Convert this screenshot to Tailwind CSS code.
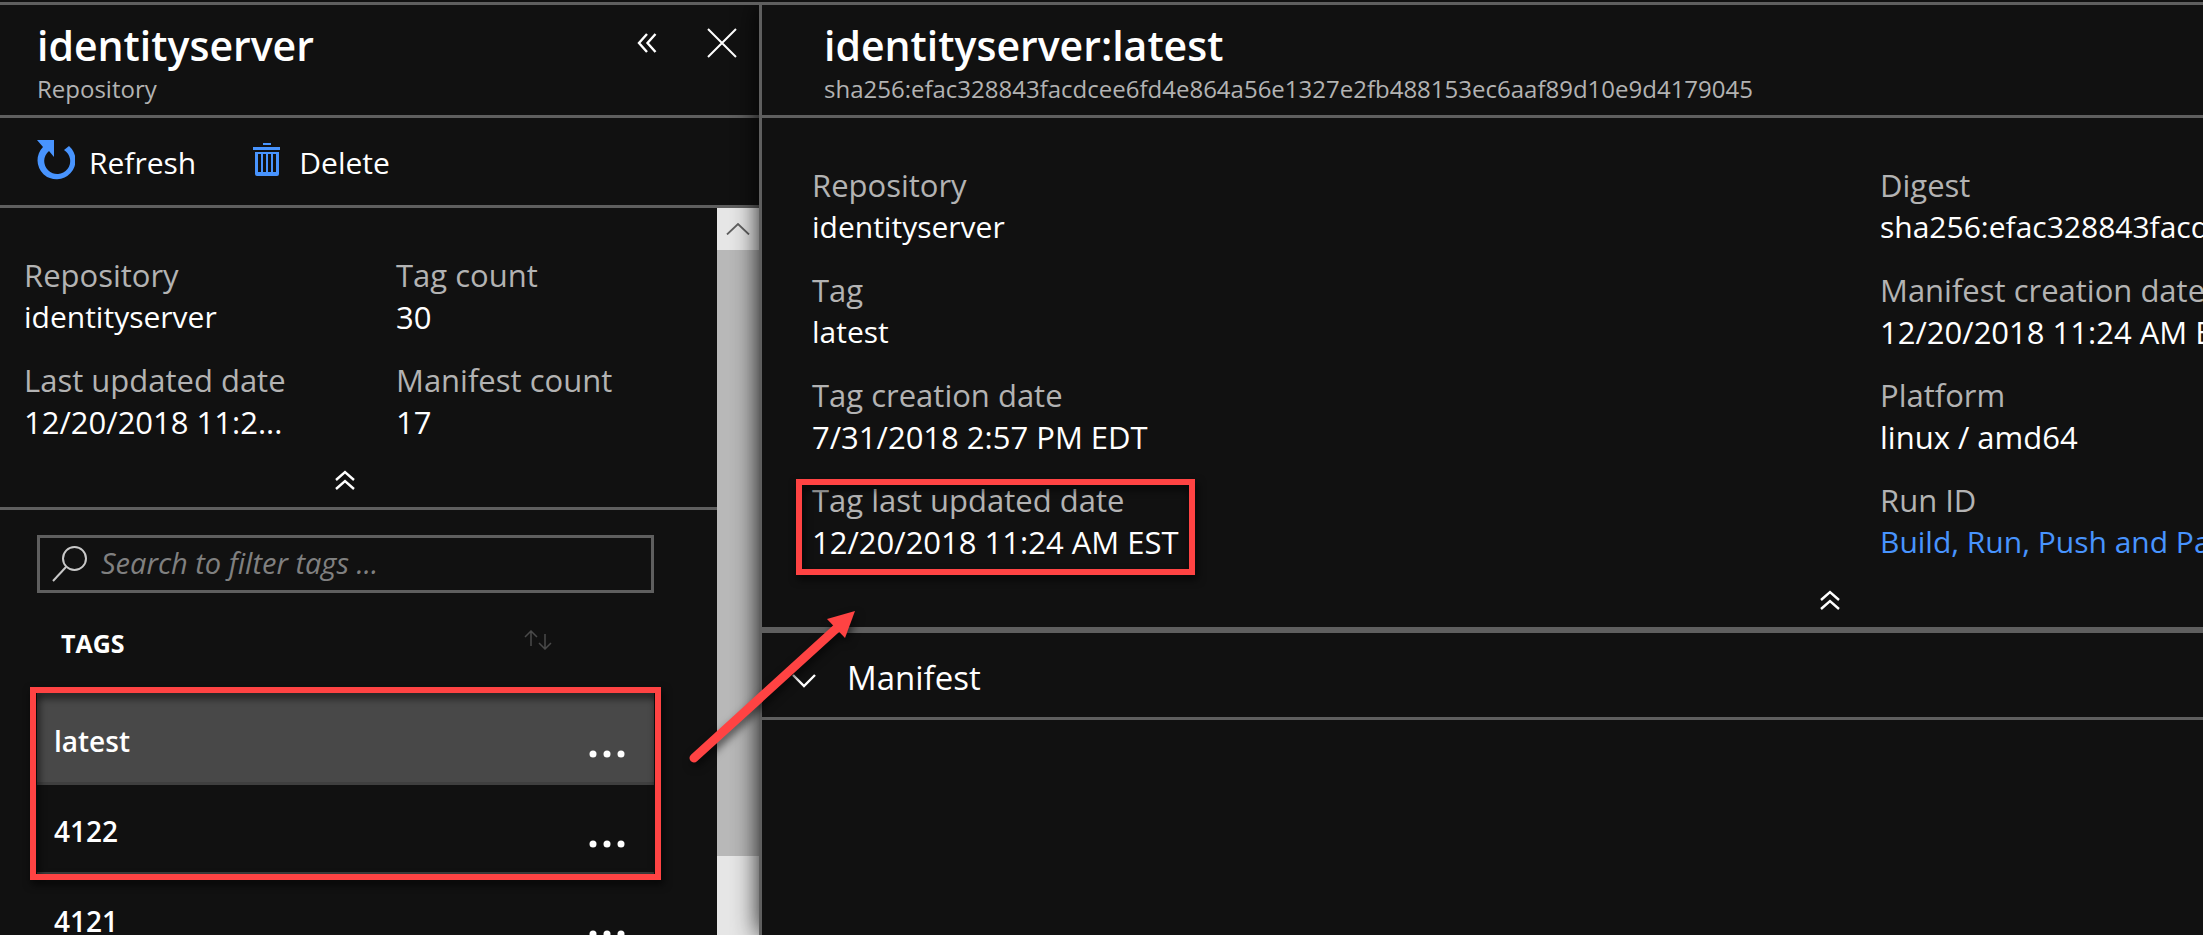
<!DOCTYPE html>
<html lang="en">
<head>
  <meta charset="UTF-8" />
  <meta name="viewport" content="width=device-width, initial-scale=1" />
  <title>identityserver - Repository</title>
  <script src="https://cdn.jsdelivr.net/npm/@tailwindcss/browser@4"></script>
</head>
<body class="bg-[#111111] text-white text-[31px] leading-[42px] font-['Open_Sans','Noto_Sans',sans-serif]">
  <div class="relative h-screen overflow-hidden flex flex-col pt-0.5">
    <div class="flex flex-1 min-h-0 border-t-3 border-[#5f5f5f]">

      <!-- Repository blade -->
      <section class="w-[759px] shrink-0 flex flex-col min-h-0">
        <header class="h-[113px] shrink-0 border-b-3 border-[#5f5f5f] flex justify-between pl-[37px] pr-[22px] pt-3">
          <div>
            <h1 class="text-[41px] leading-[56px] font-semibold">identityserver</h1>
            <p class="text-[24px] leading-[32px] text-[#b3b3b3]">Repository</p>
          </div>
          <div class="flex gap-[50px] items-start pt-[11px]">
            <button aria-label="Collapse" class="w-5 h-[30px] flex items-center">
              <svg class="w-5 h-5" viewBox="0 0 20 20" fill="none" stroke="currentColor" stroke-width="2.4"><path d="M10 1 2 10l8 9M18.500 1l-8 9 8 9" /></svg>
            </button>
            <button aria-label="Close" class="w-[30px] h-[30px]">
              <svg class="w-[30px] h-[30px]" viewBox="0 0 30 30" fill="none" stroke="currentColor" stroke-width="2"><path d="m1 1 28 28M29 1 1 29" /></svg>
            </button>
          </div>
        </header>

        <div class="h-[90px] shrink-0 border-b-3 border-[#5f5f5f] flex items-start gap-[57px] pl-[37px] pt-[22px] text-[30px]">
          <button class="flex items-start gap-[14px]">
            <svg class="w-[38px] h-10" viewBox="0 0 38 40" fill="#4894fe"><path d="M0 0h17v17l-5-6a13 13 0 1 0 15-1L32 6A19 19 0 1 1 6 7z" /></svg>
            <span class="pt-0.5">Refresh</span>
          </button>
          <button class="flex items-start gap-[18px]">
            <svg class="w-[28px] h-9 mt-0.5" viewBox="0 0 28 36" fill="#4894fe"><path d="M10 1h8v2h-8zM0 5h27v3H0zM2 10h24v22q0 2-2 2H4q-2 0-2-2zM5 12v18h3V12zm5 0v18h3V12zm5 0v18h3V12zm5 0v18h3V12z" fill-rule="evenodd" /></svg>
            <span class="pt-0.5">Delete</span>
          </button>
        </div>

        <div class="flex flex-1 min-h-0">
          <div class="flex-1 min-w-0 overflow-hidden">
            <div class="border-b-3 border-[#5f5f5f] pt-[46px]">
              <dl class="grid grid-cols-[372px_1fr] gap-y-[21px] pl-6">
                <div>
                  <dt class="text-[#b3b3b3]">Repository</dt>
                  <dd class="text-[30px]">identityserver</dd>
                </div>
                <div>
                  <dt class="text-[#b3b3b3]">Tag count</dt>
                  <dd>30</dd>
                </div>
                <div>
                  <dt class="text-[#b3b3b3]">Last updated date</dt>
                  <dd>12/20/2018 11:2...</dd>
                </div>
                <div>
                  <dt class="text-[#b3b3b3]">Manifest count</dt>
                  <dd>17</dd>
                </div>
              </dl>
              <div class="h-16 pt-[27px] pr-[27px] flex justify-center items-start">
                <button aria-label="Hide essentials">
                  <svg class="w-5 h-5" viewBox="0 0 20 20" fill="none" stroke="currentColor" stroke-width="2.4"><path d="m1 10 9-8 9 8M1 19l9-8 9 8" /></svg>
                </button>
              </div>
            </div>

            <div class="pl-[37px] pr-[63px] pt-[25px]">
              <label class="h-[58px] border-3 border-[#5f5f5f] flex items-center gap-[14px] pl-3">
                <svg class="w-[35px] h-9 shrink-0" viewBox="0 0 35 36" fill="none" stroke="#c8c8c8" stroke-width="2"><circle cx="22.500" cy="12.500" r="11.500" /><path d="M14 21 1 35" /></svg>
                <input type="text" aria-label="Search to filter tags" placeholder="Search to filter tags ..." class="flex-1 min-w-0 pb-0.5 text-[29px] leading-[42px] italic outline-none placeholder:text-[#808080]" />
              </label>

              <table class="w-full border-separate border-spacing-0">
                <thead>
                  <tr class="h-[100px]">
                    <th class="text-left text-[25px] leading-8 font-bold pl-6">TAGS</th>
                    <th class="w-[130px] text-left pb-1.5">
                      <button aria-label="Sort tags" class="block">
                        <svg class="w-7 h-5" viewBox="0 0 28 20" fill="none" stroke="#4a4a4a" stroke-width="1.500"><path d="M7 16V1M1 7l6-6 6 6M21 4v15M15 13l6 6 6-6" /></svg>
                      </button>
                    </th>
                  </tr>
                </thead>
                <tbody class="text-[28px] font-semibold">
                  <tr class="h-[92px] bg-[#484848]">
                    <td class="border-b-3 border-[#3f3f3f] pl-[17px] pt-1.5">latest</td>
                    <td class="border-b-3 border-[#3f3f3f] pt-1.5">
                      <button aria-label="More actions for latest" class="block ml-auto mr-[29px] mt-[26px]">
                        <svg class="w-9 h-2" viewBox="0 0 36 8" fill="currentColor"><circle cx="4" cy="4" r="3.500" /><circle cx="18" cy="4" r="3.500" /><circle cx="32" cy="4" r="3.500" /></svg>
                      </button>
                    </td>
                  </tr>
                  <tr class="h-[90px]">
                    <td class="border-b-3 border-[#3f3f3f] pl-[17px] pt-1">4122</td>
                    <td class="border-b-3 border-[#3f3f3f] pt-1">
                      <button aria-label="More actions for 4122" class="block ml-auto mr-[29px] mt-[26px]">
                        <svg class="w-9 h-2" viewBox="0 0 36 8" fill="currentColor"><circle cx="4" cy="4" r="3.500" /><circle cx="18" cy="4" r="3.500" /><circle cx="32" cy="4" r="3.500" /></svg>
                      </button>
                    </td>
                  </tr>
                  <tr class="h-[90px]">
                    <td class="border-b-3 border-[#3f3f3f] pl-[17px] pt-1">4121</td>
                    <td class="border-b-3 border-[#3f3f3f] pt-1">
                      <button aria-label="More actions for 4121" class="block ml-auto mr-[29px] mt-[26px]">
                        <svg class="w-9 h-2" viewBox="0 0 36 8" fill="currentColor"><circle cx="4" cy="4" r="3.500" /><circle cx="18" cy="4" r="3.500" /><circle cx="32" cy="4" r="3.500" /></svg>
                      </button>
                    </td>
                  </tr>
                </tbody>
              </table>
            </div>
          </div>

          <!-- Scrollbar -->
          <div class="w-[42px] shrink-0 bg-[#e6e6e6] flex flex-col">
            <button aria-label="Scroll up" class="h-[42px] shrink-0 flex items-center justify-center">
              <svg class="w-6 h-3" viewBox="0 0 24 12" fill="none" stroke="#606060" stroke-width="1.800"><path d="M1 11.500 12 1l11 10.500" /></svg>
            </button>
            <div class="h-[606px] shrink-0 bg-[#b8b8b8]"></div>
          </div>
        </div>
      </section>

      <!-- Tag blade -->
      <section class="relative flex-1 min-w-0 border-l-3 border-[#5f5f5f] bg-[#111111] shadow-[0_0_24px_rgba(0,0,0,0.9)] [clip-path:inset(0_0_0_-30px)]">
        <div class="min-w-[2136px]">
          <header class="h-[113px] border-b-3 border-[#5f5f5f] pl-[62px] pt-3">
            <h2 class="text-[41px] leading-[56px] font-semibold">identityserver:latest</h2>
            <p class="text-[24px] leading-[32px] text-[#b3b3b3]">sha256:efac328843facdcee6fd4e864a56e1327e2fb488153ec6aaf89d10e9d4179045</p>
          </header>

          <div class="border-b-6 border-[#5f5f5f] pt-[46px]">
            <dl class="grid grid-cols-2 gap-y-[21px] pl-[50px] -mr-[50px]">
              <div>
                <dt class="text-[#b3b3b3]">Repository</dt>
                <dd class="text-[30px]">identityserver</dd>
              </div>
              <div>
                <dt class="text-[#b3b3b3]">Digest</dt>
                <dd class="text-[30px]">sha256:efac328843facdcee6fd4e864a56e1327e2fb488153e...</dd>
              </div>
              <div>
                <dt class="text-[#b3b3b3]">Tag</dt>
                <dd class="text-[30px]">latest</dd>
              </div>
              <div>
                <dt class="text-[#b3b3b3]">Manifest creation date</dt>
                <dd>12/20/2018 11:24 AM EST</dd>
              </div>
              <div>
                <dt class="text-[#b3b3b3]">Tag creation date</dt>
                <dd>7/31/2018 2:57 PM EDT</dd>
              </div>
              <div>
                <dt class="text-[#b3b3b3]">Platform</dt>
                <dd>linux / amd64</dd>
              </div>
              <div class="relative justify-self-start">
                <dt class="text-[#b3b3b3]">Tag last updated date</dt>
                <dd>12/20/2018 11:24 AM EST</dd>
                <div class="absolute -inset-x-4 top-0 -bottom-3 border-6 border-[#ff4343] drop-shadow-[2px_4px_4px_rgba(0,0,0,0.8)]"></div>
              </div>
              <div>
                <dt class="text-[#b3b3b3]">Run ID</dt>
                <dd class="text-[30px]"><a href="#" class="text-[#4894fe]">Build, Run, Push and Patch</a></dd>
              </div>
            </dl>
            <div class="h-16 pt-[27px] flex justify-center items-start">
              <button aria-label="Hide essentials">
                <svg class="w-5 h-5" viewBox="0 0 20 20" fill="none" stroke="currentColor" stroke-width="2.400"><path d="m1 10 9-8 9 8M1 19l9-8 9 8" /></svg>
              </button>
            </div>
          </div>

          <button class="w-full h-[87px] border-b-3 border-[#5f5f5f] flex items-center gap-[31px] pl-[30px] pt-1.5 text-[33px]">
            <svg class="w-6 h-3.5 mt-1.5" viewBox="0 0 24 14" fill="none" stroke="currentColor" stroke-width="2.400"><path d="m1 1 11 11L23 1" /></svg>
            <span>Manifest</span>
          </button>
        </div>
      </section>
    </div>

    <!-- Callouts drawn over both blades -->
    <div class="absolute left-[30px] top-[687px] w-[631px] h-[193px] border-6 border-[#ff4343] drop-shadow-[2px_4px_4px_rgba(0,0,0,0.8)]"></div>
    <svg class="absolute left-[680px] top-[600px] w-[190px] h-[170px] drop-shadow-[2px_4px_4px_rgba(0,0,0,0.6)]" viewBox="680 600 190 170">
      <path d="M694 758 838 627" stroke="#ff4343" stroke-width="9" stroke-linecap="round" />
      <path d="m855 611-28 8 18 19z" fill="#ff4343" />
    </svg>
  </div>
</body>
</html>
